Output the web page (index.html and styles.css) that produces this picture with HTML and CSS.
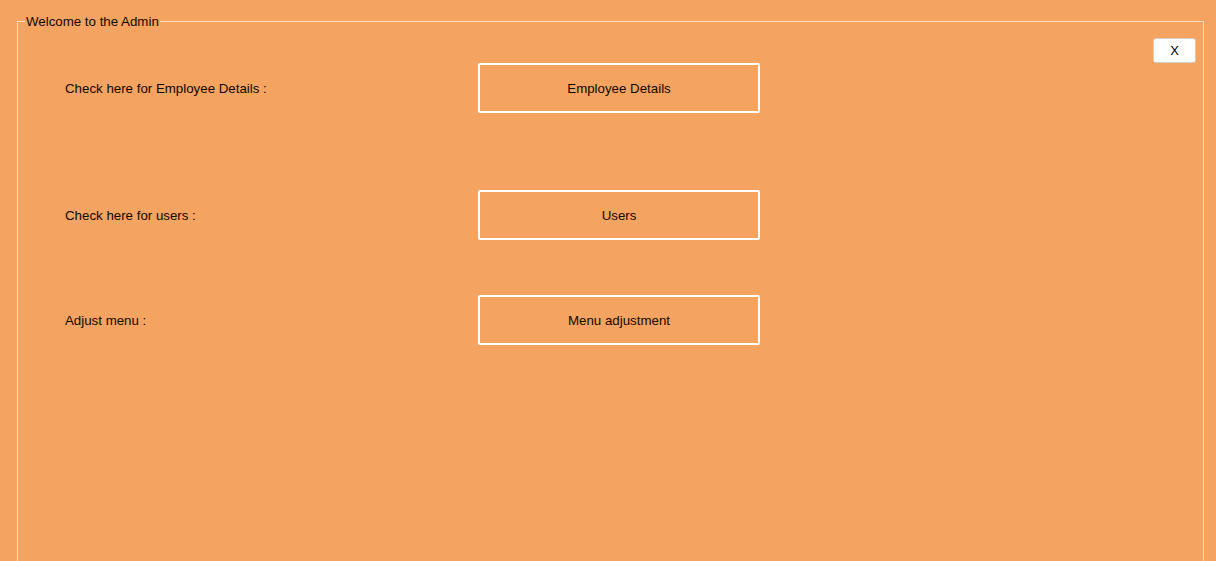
FILE: index.html
```html
<!DOCTYPE html>
<html>
<head>
<meta charset="utf-8">
<title>Admin</title>
<link rel="stylesheet" href="styles.css">
</head>
<body>
<fieldset class="panel">
  <legend class="panel-title">Welcome to the Admin</legend>
  <button class="close-btn" type="button">X</button>
  <div class="row row-first">
    <span class="row-label">Check here for Employee Details :</span>
    <button class="action-btn" type="button">Employee Details</button>
  </div>
  <div class="row row-second">
    <span class="row-label">Check here for users :</span>
    <button class="action-btn" type="button">Users</button>
  </div>
  <div class="row row-third">
    <span class="row-label">Adjust menu :</span>
    <button class="action-btn" type="button">Menu adjustment</button>
  </div>
</fieldset>
</body>
</html>
```
FILE: styles.css
```css
html, body {
  margin: 0;
  padding: 0;
  background: #f4a361;
  overflow: hidden;
}
body {
  font-family: "Liberation Sans", Arial, sans-serif;
  font-size: 13.3px;
  color: #120800;
  height: 561px;
}
.panel {
  position: relative;
  box-sizing: border-box;
  margin: 14px 12px 0 17px;
  width: 1187px;
  height: 620px;
  padding: 0 0 0 47px;
  border: 1px solid #fbdcc0;
  min-inline-size: 0;
}
.panel-title {
  margin-left: -40px;
  padding: 0 1px;
  line-height: 15px;
  font-size: 13.3px;
}
.close-btn {
  position: absolute;
  top: 9px;
  right: 7px;
  width: 43px;
  height: 25px;
  box-sizing: border-box;
  background: #ffffff;
  border: 1px solid #d2cdc8;
  border-radius: 3px;
  font-family: "Liberation Sans", Arial, sans-serif;
  font-size: 13px;
  color: #000;
  padding: 0;
}
.row {
  display: flex;
  align-items: center;
}
.row-first { margin-top: 34px; }
.row-second { margin-top: 77px; }
.row-third { margin-top: 55px; }
.row-label {
  width: 413px;
  flex: none;
  padding-top: 1px;
}
.action-btn {
  box-sizing: border-box;
  width: 282px;
  height: 50px;
  background: transparent;
  border: 2px solid #ffffff;
  border-radius: 2px;
  font-family: "Liberation Sans", Arial, sans-serif;
  font-size: 13.3px;
  color: #120800;
  padding: 0;
}
```
